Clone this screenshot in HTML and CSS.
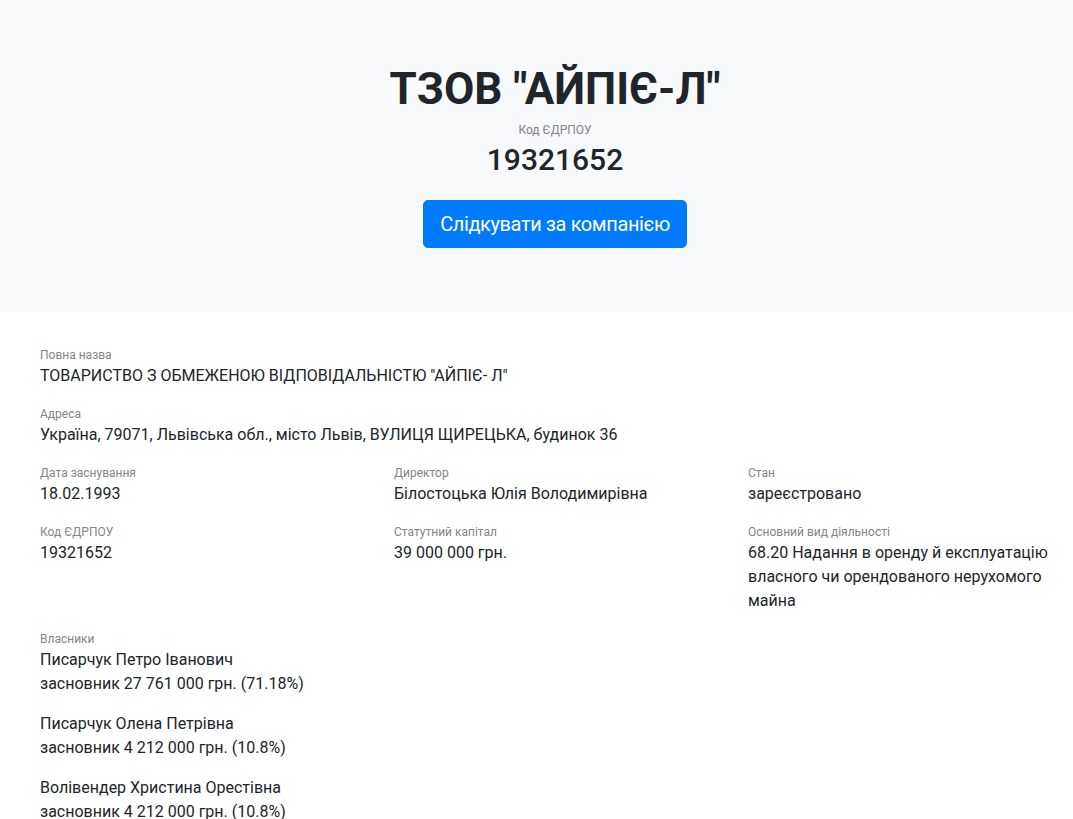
FILE: index.html
```html
<!DOCTYPE html>
<html lang="uk">
<head>
  <meta charset="UTF-8">
  <title>ТЗОВ "АЙПІЄ-Л"</title>
  <link rel="stylesheet" href="styles.css">
</head>
<body>
  <div class="jumbotron">
    <h1>ТЗОВ "АЙПІЄ-Л"</h1>
    <div class="code-label">Код ЄДРПОУ</div>
    <div class="code">19321652</div>
    <button class="btn-follow">Слідкувати за компанією</button>
  </div>

  <div class="content">
    <div class="item">
      <div class="label">Повна назва</div>
      <div class="value">ТОВАРИСТВО З ОБМЕЖЕНОЮ ВІДПОВІДАЛЬНІСТЮ "АЙПІЄ- Л"</div>
    </div>
    <div class="item">
      <div class="label">Адреса</div>
      <div class="value">Україна, 79071, Львівська обл., місто Львів, ВУЛИЦЯ ЩИРЕЦЬКА, будинок 36</div>
    </div>

    <div class="grid">
      <div class="item">
        <div class="label">Дата заснування</div>
        <div class="value">18.02.1993</div>
      </div>
      <div class="item">
        <div class="label">Директор</div>
        <div class="value">Білостоцька Юлія Володимирівна</div>
      </div>
      <div class="item">
        <div class="label">Стан</div>
        <div class="value">зареєстровано</div>
      </div>
      <div class="item">
        <div class="label">Код ЄДРПОУ</div>
        <div class="value">19321652</div>
      </div>
      <div class="item">
        <div class="label">Статутний капітал</div>
        <div class="value">39 000 000 грн.</div>
      </div>
      <div class="item">
        <div class="label">Основний вид діяльності</div>
        <div class="value">68.20 Надання в оренду й експлуатацію власного чи орендованого нерухомого майна</div>
      </div>
    </div>

    <div class="item">
      <div class="label">Власники</div>
      <div class="owner">
        <div class="value">Писарчук Петро Іванович</div>
        <div class="value">засновник 27 761 000 грн. (71.18%)</div>
      </div>
      <div class="owner">
        <div class="value">Писарчук Олена Петрівна</div>
        <div class="value">засновник 4 212 000 грн. (10.8%)</div>
      </div>
      <div class="owner">
        <div class="value">Волівендер Христина Орестівна</div>
        <div class="value">засновник 4 212 000 грн. (10.8%)</div>
      </div>
    </div>
  </div>
</body>
</html>
```

FILE: styles.css
```css
body { margin: 0; font-family: Roboto, "Noto Sans", sans-serif; color: #212529; background: #fff; }

.jumbotron { background: #f8f9fa; padding: 63px 0 64px 37px; text-align: center; }
.jumbotron h1 { margin: 0; font-size: 44px; font-weight: 700; line-height: 52px; }
.code-label { margin-top: 6px; font-size: 12px; line-height: 18px; color: #80868b; }
.code { margin-top: 3px; font-size: 30px; font-weight: 500; line-height: 36px; }
.btn-follow { margin-top: 22px; font-family: inherit; font-size: 20px; letter-spacing: -0.4px; line-height: 30px; padding: 8px 16px; color: #fff; background: #007bff; border: 1px solid #007bff; border-radius: 5px; cursor: pointer; }

.content { padding: 34px 40px 20px; }
.item { margin-bottom: 17px; }
.label { font-size: 12px; line-height: 18px; color: #80868b; }
.value { font-size: 16px; line-height: 24px; }
.grid { display: grid; grid-template-columns: repeat(3, 324px); column-gap: 30px; }
.owner { margin-bottom: 16px; }
```
